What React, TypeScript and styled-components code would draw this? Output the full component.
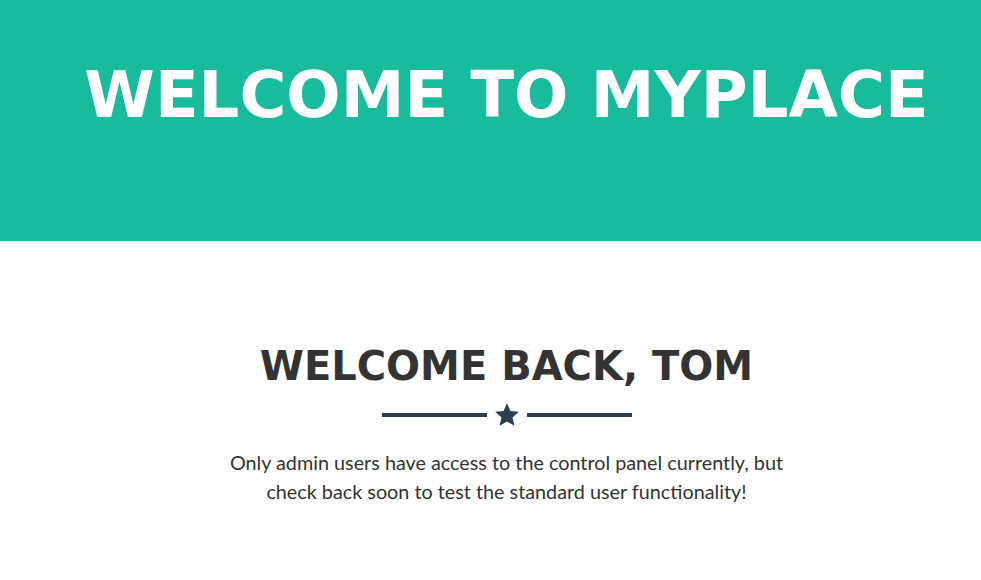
import React from "react";
import styled, { createGlobalStyle } from "styled-components";

const GlobalStyle = createGlobalStyle`
  html, body {
    margin: 0;
    padding: 0;
    overflow: hidden;
    background: #ffffff;
  }
`;

const S = {
  Page: styled.div`
    width: 1013px;
    min-height: 580px;
    font-family: Lato, "Liberation Sans", sans-serif;
  `,
  Header: styled.header`
    height: 241px;
    background-color: #18bc9c;
    display: flex;
    justify-content: center;
    padding-top: 63px;
    box-sizing: border-box;
  `,
  Title: styled.h1`
    margin: 0;
    color: #ffffff;
    font-family: "DejaVu Sans", sans-serif;
    font-weight: 700;
    font-size: 64px;
    line-height: 1;
    white-space: nowrap;
  `,
  Section: styled.section`
    display: flex;
    flex-direction: column;
    align-items: center;
    padding-top: 105px;
  `,
  Heading: styled.h2`
    margin: 0;
    color: #333333;
    font-family: "DejaVu Sans", sans-serif;
    font-weight: 700;
    font-size: 40px;
    line-height: 1;
    white-space: nowrap;
  `,
  Divider: styled.div`
    display: flex;
    align-items: center;
    gap: 7px;
    margin: 16px 0 20px;
  `,
  Line: styled.span`
    display: block;
    width: 105px;
    height: 4px;
    background-color: #2c3e50;
  `,
  Text: styled.p`
    margin: 0;
    width: 570px;
    text-align: center;
    color: #333333;
    font-size: 19.8px;
    line-height: 29px;
  `,
};

const Star = () => (
  <svg width="26" height="26" viewBox="0 0 24 24">
    <path
      fill="#2c3e50"
      d="M12 1.2l3.2 7.1 7.7.8-5.8 5.2 1.7 7.6L12 18l-6.8 3.9 1.7-7.6L1.1 9.1l7.7-.8z"
    />
  </svg>
);

const App = () => {
  return (
    <S.Page>
      <GlobalStyle />
      <S.Header>
        <S.Title>WELCOME TO MYPLACE</S.Title>
      </S.Header>
      <S.Section>
        <S.Heading>WELCOME BACK, TOM</S.Heading>
        <S.Divider>
          <S.Line />
          <Star />
          <S.Line />
        </S.Divider>
        <S.Text>
          Only admin users have access to the control panel currently, but
          check back soon to test the standard user functionality!
        </S.Text>
      </S.Section>
    </S.Page>
  );
};

export default App;
